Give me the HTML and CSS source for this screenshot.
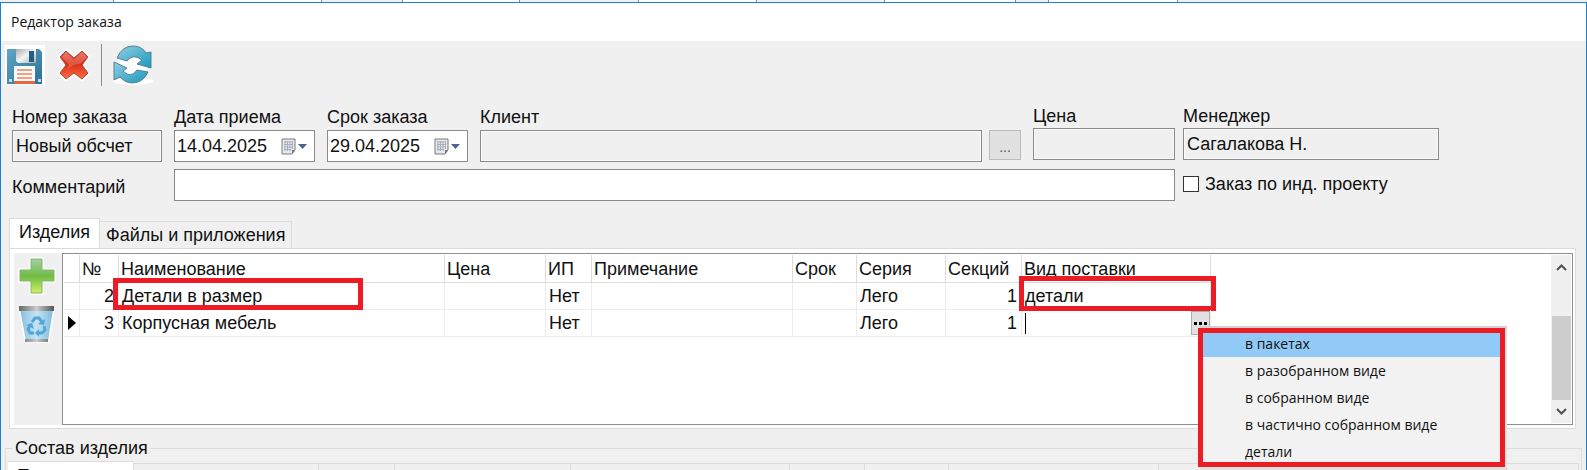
FILE: index.html
```
<!DOCTYPE html>
<html lang="ru">
<head>
    <meta charset="UTF-8">
    <meta name="viewport" content="width=device-width, initial-scale=1.0">
    <title>Редактор заказа</title>
    <link rel="stylesheet" href="styles.css">
</head>
<body>
    <!-- Edge of the window behind -->
    <div class="backdrop">
        <span></span><span></span><span></span><span></span><span></span><span></span><span></span><span></span><span></span><span></span>
    </div>

    <main class="window">
        <h1 class="title">Редактор заказа</h1>

        <div class="toolbar">
            <button type="button" class="tool tool-save" aria-label="Сохранить">
                <svg width="40" height="40" viewBox="0 0 40 40">
                    <defs>
                        <linearGradient id="disk" x1="0" y1="0" x2="1" y2="1"><stop offset="0" stop-color="#5fa5c4"/><stop offset="1" stop-color="#2b6f98"/></linearGradient>
                        <linearGradient id="metal" x1="0" y1="0" x2="1" y2="1"><stop offset="0" stop-color="#a9acaf"/><stop offset=".5" stop-color="#f4f4f4"/><stop offset="1" stop-color="#a5a8ab"/></linearGradient>
                    </defs>
                    <rect width="40" height="40" fill="#fff"/>
                    <path d="M2 4h32l3 3v32H2z" fill="url(#disk)"/>
                    <path d="M11 4h20v14H13l-2-2z" fill="url(#metal)"/>
                    <path d="M24 6h5v11h-5z" fill="#1f6083"/>
                    <path d="M9 21h21v18H9z" fill="#f5fafb"/>
                    <path d="M9 36h21v3H9z" fill="#e9643f"/>
                    <path d="M12 25h15M12 29h15M12 33h15" stroke="#f0835f" stroke-width="1.500"/>
                    <path d="M4 34h3v3H4zM33 34h3v3h-3z" fill="#b9dcea"/>
                </svg>
            </button>
            <button type="button" class="tool tool-delete" aria-label="Удалить">
                <svg width="34" height="34" viewBox="0 0 34 34">
                    <defs>
                        <linearGradient id="cross" x1="0" y1="0" x2="0" y2="1"><stop offset="0" stop-color="#e05a4b"/><stop offset=".45" stop-color="#d92b12"/><stop offset="1" stop-color="#ff7044"/></linearGradient>
                    </defs>
                    <path d="M9 3l8 7 8-7 6 6-6 8 6 8-6 6-8-6-8 6-6-6 6-8-6-8z" fill="url(#cross)" stroke="#fff" stroke-width="4" paint-order="stroke"/>
                    <path d="M9 3l8 7 8-7 6 6-6 8 6 8-6 6-8-6-8 6-6-6 6-8-6-8z" fill="none" stroke="#b84335"/>
                    <path d="M9 4l8 8 8-8 5 5-7 7q-9 0-13 7l2-6-7-8z" fill="#fff" opacity=".2"/>
                </svg>
            </button>
            <span class="divider"></span>
            <button type="button" class="tool tool-refresh" aria-label="Обновить">
                <svg width="40" height="40" viewBox="0 0 40 40">
                    <defs>
                        <linearGradient id="arrow" x1="0" y1="0" x2="1" y2="1"><stop offset="0" stop-color="#8fcfe2"/><stop offset="1" stop-color="#1b98be"/></linearGradient>
                    </defs>
                    <ellipse cx="20" cy="36" rx="20" ry="4" fill="#fff"/>
                    <circle cx="20" cy="20" r="15" fill="#fff"/>
                    <path d="M4 13Q9 1 20 1q9 0 13 7l5-1v16l-14-4 5-4q-9-7-15 1z" fill="url(#arrow)" stroke="#55818f"/>
                    <path d="M35 27q-5 11-16 11-7 0-12-6l-6 3V17l13 6-4 3q8 8 14-1z" fill="url(#arrow)" stroke="#55818f"/>
                </svg>
            </button>
        </div>

        <form class="order">
            <div class="order-main">
                <div class="field">
                    <label for="number">Номер заказа</label>
                    <input id="number" class="box readonly" type="text" value="Новый обсчет" readonly>
                </div>
                <div class="field">
                    <label for="received">Дата приема</label>
                    <div class="box date">
                        <input id="received" type="text" value="14.04.2025">
                        <button type="button" class="picker" aria-label="Выбрать дату приема">
                            <svg width="26" height="17" viewBox="0 0 26 17">
                                <path d="M1 1h13v11l-3 4H1z" fill="#e6e8ec" stroke="#7f7878"/>
                                <path d="M3 4h9M3 6.500h9M3 9h9M3 11.500h7M4 3v10M6.500 3v10M9 3v10M11.500 3v8" stroke="#a8b0bf"/>
                                <path d="M14 12l-3 4v-4z" fill="#777"/>
                                <path d="M17 6h9l-4.500 5z" fill="#4a6390"/>
                            </svg>
                        </button>
                    </div>
                </div>
                <div class="field">
                    <label for="deadline">Срок заказа</label>
                    <div class="box date">
                        <input id="deadline" type="text" value="29.04.2025">
                        <button type="button" class="picker" aria-label="Выбрать срок заказа">
                            <svg width="26" height="17" viewBox="0 0 26 17">
                                <path d="M1 1h13v11l-3 4H1z" fill="#e6e8ec" stroke="#7f7878"/>
                                <path d="M3 4h9M3 6.500h9M3 9h9M3 11.500h7M4 3v10M6.500 3v10M9 3v10M11.500 3v8" stroke="#a8b0bf"/>
                                <path d="M14 12l-3 4v-4z" fill="#777"/>
                                <path d="M17 6h9l-4.500 5z" fill="#4a6390"/>
                            </svg>
                        </button>
                    </div>
                </div>
                <div class="field">
                    <label for="client">Клиент</label>
                    <div class="client-row">
                        <input id="client" class="box readonly" type="text" readonly>
                        <button type="button" class="browse" aria-label="Выбрать клиента">...</button>
                    </div>
                </div>
                <div class="field compact">
                    <label for="price">Цена</label>
                    <input id="price" class="box readonly" type="text" readonly>
                </div>
                <label class="comment-label" for="comment">Комментарий</label>
                <input id="comment" class="box comment" type="text">
            </div>
            <div class="order-side">
                <div class="field compact">
                    <label for="manager">Менеджер</label>
                    <input id="manager" class="box readonly" type="text" value="Сагалакова Н." readonly>
                </div>
                <label class="check"><input type="checkbox">Заказ по инд. проекту</label>
            </div>
        </form>

        <div class="tabs">
            <button type="button" class="tab active">Изделия</button>
            <button type="button" class="tab">Файлы и приложения</button>
        </div>
        <section class="pane">
            <div class="side-tools">
                <button type="button" class="tool" aria-label="Добавить">
                    <svg width="38" height="38" viewBox="0 0 38 38">
                        <defs>
                            <linearGradient id="plus" x1="0" y1="0" x2="0" y2="1"><stop offset="0" stop-color="#a5cfa5"/><stop offset=".5" stop-color="#6fbb45"/><stop offset="1" stop-color="#d0f060"/></linearGradient>
                        </defs>
                        <path d="M13 2h11v11h12v11H24v12H13V24H2V13h11z" fill="url(#plus)" stroke="#fff" stroke-width="4" paint-order="stroke"/>
                        <path d="M13 2h11v11h12v11H24v12H13V24H2V13h11z" fill="none" stroke="#83b56c"/>
                    </svg>
                </button>
                <button type="button" class="tool" aria-label="В корзину">
                    <svg width="38" height="40" viewBox="0 0 38 40">
                        <defs>
                            <linearGradient id="bin" x1="0" y1="0" x2="1" y2="0"><stop offset="0" stop-color="#86bfdf"/><stop offset=".5" stop-color="#c3e4f5"/><stop offset="1" stop-color="#80bbdc"/></linearGradient>
                            <linearGradient id="rim" x1="0" y1="0" x2="1" y2="0"><stop offset="0" stop-color="#666"/><stop offset=".5" stop-color="#ccc"/><stop offset="1" stop-color="#555"/></linearGradient>
                        </defs>
                        <path d="M2 5h33l-5 32H8z" fill="url(#bin)" stroke="#fff" stroke-width="3" paint-order="stroke"/>
                        <path d="M1 2h35v5H1zM7 35h23v3H7z" fill="url(#rim)"/>
                        <path d="M14 18l3-4h4l3 4M26 22l1 4-3 3h-4M16 29h-4l-2-4 2-3" fill="none" stroke="#55a6d6" stroke-width="3"/>
                        <path d="M27 15l-1 6-6-1zM21 25v8l-4-4zM8 21l6-2 2 6z" fill="#55a6d6"/>
                    </svg>
                </button>
            </div>
            <div class="grid-box">
                <table class="grid">
                    <colgroup>
                        <col class="c-mark"><col class="c-num"><col class="c-name"><col class="c-price"><col class="c-ip"><col class="c-note"><col class="c-term"><col class="c-series"><col class="c-sections"><col class="c-supply">
                    </colgroup>
                    <thead>
                        <tr><th></th><th>№</th><th>Наименование</th><th>Цена</th><th>ИП</th><th>Примечание</th><th>Срок</th><th>Серия</th><th>Секций</th><th>Вид поставки</th></tr>
                    </thead>
                    <tbody>
                        <tr>
                            <td></td><td class="num">2</td>
                            <td class="anchor">Детали в размер<span class="frame frame-name"></span></td>
                            <td></td><td>Нет</td><td></td><td></td><td>Лего</td><td class="num">1</td>
                            <td class="anchor">детали<span class="frame frame-supply"></span></td>
                        </tr>
                        <tr>
                            <td class="mark"><svg width="8" height="14" viewBox="0 0 8 14"><path d="M0 0l8 7-8 7z"/></svg></td><td class="num">3</td>
                            <td>Корпусная мебель</td>
                            <td></td><td>Нет</td><td></td><td></td><td>Лего</td><td class="num">1</td>
                            <td class="anchor">
                                <div class="editor">
                                    <span class="caret"></span>
                                    <button type="button" class="more" aria-label="Вид поставки"><svg width="13" height="3" viewBox="0 0 13 3"><path d="M0 0h3v3H0zM5 0h3v3H5zM10 0h3v3h-3z"/></svg></button>
                                </div>
                                <ul class="menu" role="menu">
                                    <li role="menuitem" class="selected">в пакетах</li>
                                    <li role="menuitem">в разобранном виде</li>
                                    <li role="menuitem">в собранном виде</li>
                                    <li role="menuitem">в частично собранном виде</li>
                                    <li role="menuitem">детали</li>
                                </ul>
                            </td>
                        </tr>
                    </tbody>
                </table>
                <div class="scrollbar">
                    <svg width="11" height="7" viewBox="0 0 11 7"><path d="M1 6l4.500-4.500L10 6" fill="none" stroke="#505050" stroke-width="2"/></svg>
                    <span class="thumb"></span>
                    <svg width="11" height="7" viewBox="0 0 11 7"><path d="M1 1l4.500 4.500L10 1" fill="none" stroke="#505050" stroke-width="2"/></svg>
                </div>
            </div>
        </section>

        <fieldset class="parts">
            <legend>Состав изделия</legend>
            <div class="part-tabs">
                <button type="button" class="part-tab active">Панели</button>
                <span class="part-tab"></span><span class="part-tab"></span><span class="part-tab"></span><span class="part-tab"></span><span class="part-tab"></span><span class="part-tab"></span><span class="part-tab"></span><span class="part-tab"></span>
            </div>
        </fieldset>
    </main>
</body>
</html>
```

FILE: styles.css
```
* {
    box-sizing: border-box;
}

body {
    margin: 0;
    height: 100vh;
    overflow: hidden;
    display: flex;
    flex-direction: column;
    background: #f0f0f0;
    color: #111;
    font-family: "Liberation Sans", Arial, sans-serif;
    font-size: 18px;
    line-height: 20px;
}

button,
input {
    font: inherit;
    color: inherit;
    margin: 0;
}

button {
    padding: 0;
    border: 0;
    background: none;
}

svg {
    display: block;
}

.backdrop {
    flex: none;
    display: grid;
    grid-template-columns: 114px 208px 81px 117px 119px 118px 128px 131px 33px 129px;
    height: 2px;
}

.backdrop span {
    border-right: 1px solid #8c8c8c;
}

.backdrop span:nth-child(even) {
    background: #fff;
}

.window {
    flex: 1;
    min-height: 0;
    overflow: hidden;
    display: flex;
    flex-direction: column;
    border: 1px solid #1a80d2;
    border-bottom: 0;
}

.title {
    flex: none;
    margin: 0;
    padding: 9px 10px;
    background: #fff;
    font-family: "Open Sans", sans-serif;
    font-size: 14px;
    font-weight: normal;
    line-height: 20px;
}

/* Toolbar */
.toolbar {
    flex: none;
    display: flex;
    align-items: center;
    height: 48px;
    padding-left: 4px;
}

.tool-delete {
    margin-left: 12px;
}

.divider {
    width: 1px;
    height: 42px;
    margin: 0 11px 0 10px;
    background: #8c8c8c;
}

/* Order fields */
.order {
    flex: none;
    display: flex;
    gap: 8px;
    padding: 16px 9px 0 11px;
}

.order-main {
    flex: 1;
    display: grid;
    grid-template-columns: 150px 141px 141px 1fr 142px;
    column-gap: 12px;
    row-gap: 7px;
}

.order-side {
    width: 394px;
}

.order-side .box {
    width: 256px;
}

.field label {
    display: block;
    height: 25px;
    line-height: 24px;
}

.field.compact label {
    height: 23px;
    line-height: 22px;
}

.box {
    display: block;
    width: 100%;
    height: 32px;
    padding: 0 3px;
    border: 1px solid #8a8a8a;
    border-radius: 0;
    background: #fff;
    outline: 0;
}

.readonly {
    background: #f0f0f0;
    box-shadow: inset 0 0 0 1px #fafafa;
}

.date {
    display: flex;
    align-items: center;
    justify-content: space-between;
    padding: 0 7px 0 2px;
}

.date input {
    width: 100px;
    padding: 0;
    border: 0;
    background: none;
}

.client-row {
    display: flex;
    gap: 7px;
}

.client-row .box {
    flex: 1;
    min-width: 0;
}

.browse {
    width: 32px;
    height: 30px;
    padding-top: 4px;
    border: 1px solid #bcbcbc;
    background: #e1e1e1;
    color: #555;
    font-size: 14px;
}

.comment-label {
    height: 34px;
    line-height: 36px;
}

.comment {
    grid-column: 2 / -1;
}

.check {
    display: flex;
    align-items: center;
    gap: 6px;
    margin-top: 8px;
    height: 32px;
}

.check input {
    appearance: none;
    width: 16px;
    height: 16px;
    border: 1px solid #333;
    background: #fff;
}

/* Tabs */
.tabs {
    flex: none;
    display: flex;
    align-items: flex-end;
    padding-left: 8px;
    margin-top: 15px;
}

.tab {
    height: 27px;
    padding: 0 6px;
    border: 1px solid #dcdcdc;
    border-bottom: 0;
    border-left: 0;
}

.tab.active {
    height: 30px;
    padding: 0 9px 4px;
    border-left: 1px solid #dcdcdc;
    background: #fff;
}

.pane {
    flex: none;
    display: flex;
    height: 181px;
    margin: 0 10px 0 8px;
    padding: 4px 2px 3px 4px;
    border: 1px solid #dcdcdc;
    background: #fff;
}

.side-tools {
    width: 48px;
    padding: 4px 0 0 4px;
    display: flex;
    flex-direction: column;
    gap: 9px;
    background: #f0f0f0;
}

.grid-box {
    flex: 1;
    display: flex;
    justify-content: space-between;
    padding: 1px;
    border: 1px solid #8f8f8f;
}

.grid {
    align-self: flex-start;
    table-layout: fixed;
    width: 1147px;
    border-collapse: separate;
    border-spacing: 0;
}

.c-mark { width: 16px; }
.c-num { width: 39px; }
.c-name { width: 326px; }
.c-price { width: 101px; }
.c-ip { width: 46px; }
.c-note { width: 201px; }
.c-term { width: 64px; }
.c-series { width: 89px; }
.c-sections { width: 76px; }
.c-supply { width: 189px; }

.grid th,
.grid td {
    height: 27px;
    padding: 0 0 0 3px;
    border-right: 1px solid #ededed;
    border-bottom: 1px solid #ededed;
    font-weight: normal;
    text-align: left;
    white-space: nowrap;
}

.grid th {
    height: 28px;
    padding-left: 2px;
    border-color: #dcdcdc;
}

.grid .num {
    text-align: right;
    padding-right: 4px;
}

.grid .mark {
    padding-left: 4px;
}

.grid .anchor {
    position: relative;
}

.editor {
    display: flex;
    justify-content: space-between;
    align-items: center;
}

.caret {
    width: 1px;
    height: 21px;
    background: #000;
}

.more {
    display: flex;
    align-items: center;
    justify-content: center;
    width: 19px;
    height: 24px;
    border: 1px solid #adadad;
    background: #e1e1e1;
}

/* Red marks over the cells */
.frame {
    position: absolute;
    border: 5px solid #ed1c24;
}

.frame-name {
    left: -6px;
    top: -5px;
    width: 250px;
    height: 32px;
}

.frame-supply {
    left: -3px;
    top: -7px;
    width: 197px;
    height: 35px;
}

.menu {
    position: absolute;
    z-index: 1;
    left: 176px;
    top: 18px;
    width: 307px;
    height: 139px;
    margin: 0;
    padding: 0;
    border: 5px solid #ed1c24;
    box-shadow: 2px 3px 0 #e0e0e0, 2px -2px 0 #d0d0d0;
    background: #f2f2f2;
    list-style: none;
    font-family: "Open Sans", sans-serif;
    font-size: 14px;
}

.menu li {
    padding-left: 42px;
    line-height: 27px;
}

.menu .selected {
    padding-bottom: 2px;
    line-height: 22px;
    background: #91c9f7;
}

.scrollbar {
    width: 20px;
    display: flex;
    flex-direction: column;
    align-items: center;
    padding: 9px 0 8px;
    background: #f0f0f0;
}

.thumb {
    width: 19px;
    height: 84px;
    margin: auto 0 8px;
    background: #cdcdcd;
}

/* Lower group */
.parts {
    flex: none;
    margin: 9px 4px 0;
    padding: 0 2px;
    border: 1px solid #dcdcdc;
    min-width: 0;
}

.parts legend {
    margin-left: 5px;
    padding: 0 2px;
}

.part-tabs {
    display: grid;
    grid-template-columns: 126px 185px 76px 176px 219px 75px 84px 210px 1fr;
    align-items: end;
    margin-top: 3px;
}

.part-tab {
    height: 28px;
    border: 1px solid #dcdcdc;
    border-left: 0;
}

.part-tab.active {
    height: 30px;
    padding: 0 9px;
    background: #fff;
    text-align: left;
}
```
